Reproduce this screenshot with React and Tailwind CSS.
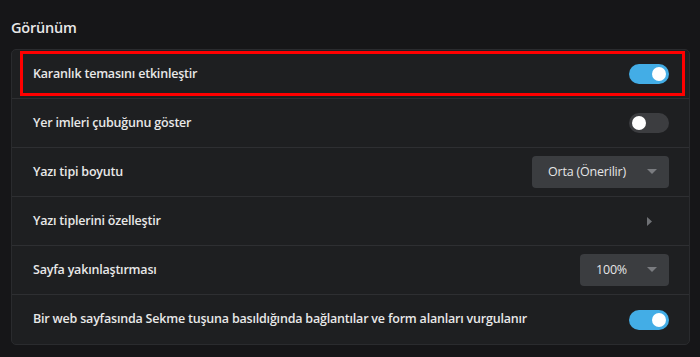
const font = { fontFamily: '"Segoe UI", "Open Sans", "Noto Sans", sans-serif' }

function Toggle({ on }) {
  return (
    <div
      className={`flex h-5 w-10 items-center rounded-full px-[3px] ${
        on ? 'justify-end bg-[#43ade6]' : 'justify-start bg-[#3c3d40]'
      }`}
    >
      <div className="h-[14px] w-[14px] rounded-full bg-white" />
    </div>
  )
}

function Select({ label, width }) {
  return (
    <div
      className={`flex h-8 items-center justify-between rounded bg-[#3b3d40] pl-[16px] pr-[12px] text-[12.5px] font-normal tracking-[-0.2px] text-[#e6e6e6] ${width}`}
    >
      <span>{label}</span>
      <svg width="10" height="6" viewBox="0 0 10 6">
        <path d="M0 0 L10 0 L5 5 Z" fill="#7a7c80" />
      </svg>
    </div>
  )
}

function Row({ label, children, highlight, last }) {
  return (
    <div
      className={`relative flex h-[49px] items-center justify-between pl-[21px] pr-[20px] ${
        last ? '' : 'border-b border-[#2e2f32]'
      }`}
    >
      {highlight && (
        <div className="pointer-events-none absolute left-[8px] right-[4px] top-[1px] bottom-[2px] border-[3px] border-[#ff0000]" />
      )}
      <span className="text-[12.5px] font-semibold tracking-[-0.2px] text-[#e8e8e8]">{label}</span>
      {children}
    </div>
  )
}

export default function App() {
  return (
    <div className="h-[357px] w-[700px] bg-[#161618] px-[11px] pt-[18px]" style={font}>
      <h2 className="mb-[11px] text-[14.5px] font-semibold leading-5 tracking-[-0.2px] text-[#e8e8e8]">Görünüm</h2>
      <div className="w-[679px] rounded-[5px] border border-[#2a2b2e] bg-[#1e1f21]">
        <Row label="Karanlık temasını etkinleştir" highlight>
          <Toggle on />
        </Row>
        <Row label="Yer imleri çubuğunu göster">
          <Toggle />
        </Row>
        <Row label="Yazı tipi boyutu">
          <Select label="Orta (Önerilir)" width="w-[137px]" />
        </Row>
        <Row label="Yazı tiplerini özelleştir">
          <svg className="mr-[17px]" width="5" height="9" viewBox="0 0 5 9">
            <path d="M0 0 L5 4.5 L0 9 Z" fill="#6f7175" />
          </svg>
        </Row>
        <Row label="Sayfa yakınlaştırması">
          <Select label="100%" width="w-[89px]" />
        </Row>
        <Row label="Bir web sayfasında Sekme tuşuna basıldığında bağlantılar ve form alanları vurgulanır" last>
          <Toggle on />
        </Row>
      </div>
    </div>
  )
}
